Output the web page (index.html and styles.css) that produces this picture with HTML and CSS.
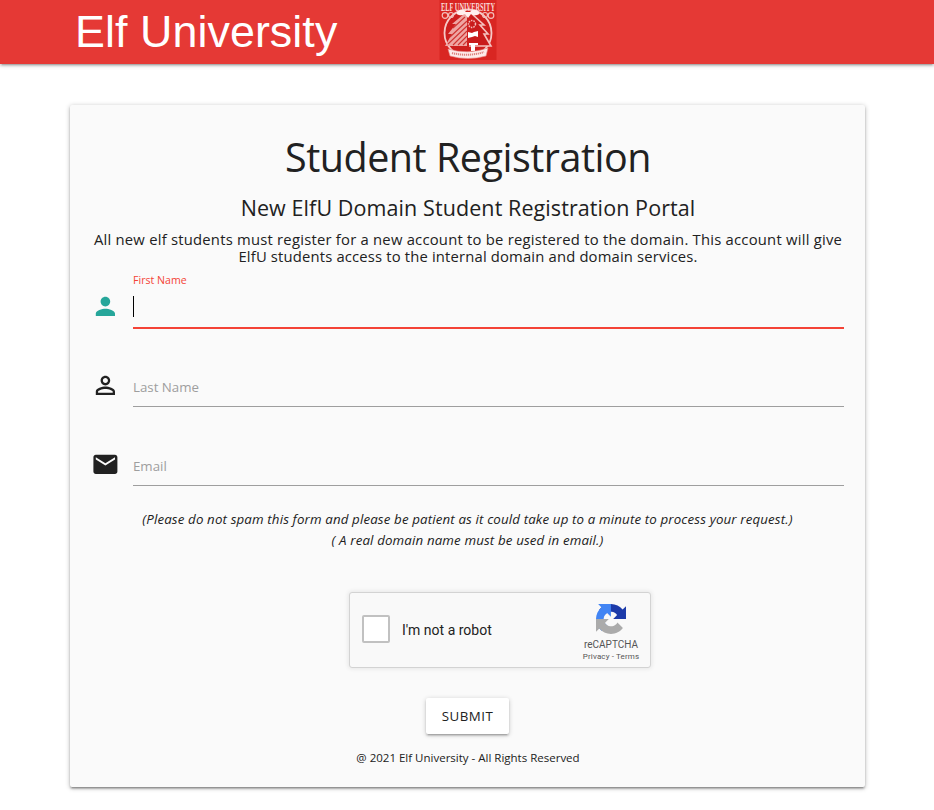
FILE: index.html
```html
<!DOCTYPE html>
<html lang="en">
<head>
<meta charset="utf-8">
<title>Elf University</title>
<link rel="stylesheet" href="styles.css">
</head>
<body>
<header class="nav">
  <div class="brand">Elf University</div>
  <svg class="crest" viewBox="0 0 58 60" aria-label="Elf University crest">
    <rect width="57" height="60" x=".5" fill="#d92622"/>
    <circle cx="29" cy="33" r="23.500" fill="#cd1f1e" stroke="#f6c9c6" stroke-width="1.800"/>
    <g fill="none" stroke="#f3bdba" stroke-width="1.200">
      <circle cx="6" cy="15.500" r="2.800"/><circle cx="12" cy="15" r="2.500"/><circle cx="52" cy="15.500" r="2.800"/><circle cx="46" cy="15" r="2.500"/>
    </g>
    <path d="M25 14L13 24h4l-8 10h4L6 46h22V14z" fill="#efa6a3"/>
    <path d="M26 17L14 28M28 21L11 37M28 26L9 44M28 31L14 45M28 36L19 45M28 41L24 45" stroke="#cf3532" stroke-width="1.100"/>
    <path d="M33 14l12 11h-4l8 9h-4l7 12H30" fill="#c91b1b" stroke="#f5c2bf" stroke-width="1.600"/>
    <text class="crest-name" x="29" y="11" textLength="54" lengthAdjust="spacingAndGlyphs" text-anchor="middle">ELF UNIVERSITY</text>
    <path d="M19 11q5-3 8 1h4q3-4 8-1 3 3-1 4-4 1-6-1l-3 4-3-4q-3 2-6 1-4-1-1-4z" fill="#fff0ef"/>
    <circle cx="33" cy="24" r="3.500" fill="none" stroke="#f4bcba" stroke-width="1.500" stroke-dasharray="1.500 1"/>
    <path d="M29 32l4 1 2-1 4-1v6l-3-1-3 1-4 1zM30 43h9v2h-3v6h-4v-6h-2z" fill="#fff"/>
    <path d="M9 49q20 6 40-1l-2 8q-18 5-36 0z" fill="#fdebea" stroke="#e88a87" stroke-width=".6"/>
    <path d="M13 53q16 4 32-1" fill="none" stroke="#dd817e" stroke-width="2" stroke-dasharray="1.200 .8"/>
  </svg>
</header>
<main class="card">
  <h1 class="title">Student Registration</h1>
  <h2 class="subtitle">New ElfU Domain Student Registration Portal</h2>
  <p class="intro">All new elf students must register for a new account to be registered to the domain. This account will give<br><span class="intro-end">ElfU students access to the internal domain and domain services.</span></p>
  <form class="form">
    <div class="field active">
      <svg class="icon" viewBox="0 0 24 24"><path d="M12 12c2.210 0 4-1.790 4-4s-1.790-4-4-4-4 1.790-4 4 1.790 4 4 4zm0 2c-2.670 0-8 1.340-8 4v2h16v-2c0-2.660-5.330-4-8-4z"/></svg>
      <div class="control"><label>First Name</label><i class="caret"></i></div>
    </div>
    <div class="field">
      <svg class="icon" viewBox="0 0 24 24"><path d="M12 5.900c1.160 0 2.100.94 2.100 2.100s-.94 2.100-2.100 2.100S9.900 9.160 9.900 8s.94-2.100 2.100-2.100m0 9c2.970 0 6.100 1.460 6.100 2.100v1.100H5.900V17c0-.64 3.130-2.100 6.100-2.100M12 4C9.790 4 8 5.790 8 8s1.790 4 4 4 4-1.790 4-4-1.790-4-4-4zm0 9c-2.670 0-8 1.340-8 4v3h16v-3c0-2.660-5.330-4-8-4z"/></svg>
      <div class="control"><label>Last Name</label></div>
    </div>
    <div class="field">
      <svg class="icon" viewBox="0 0 24 24"><path d="M20 4H4c-1.100 0-1.990.9-1.990 2L2 18c0 1.100.9 2 2 2h16c1.100 0 2-.9 2-2V6c0-1.100-.9-2-2-2zm0 4l-8 5-8-5V6l8 5 8-5v2z"/></svg>
      <div class="control"><label>Email</label></div>
    </div>
    <p class="note">(Please do not spam this form and please be patient as it could take up to a minute to process your request.)<br>( A real domain name must be used in email.)</p>
    <div class="captcha">
      <div class="check"></div>
      <div class="robot">I'm not a robot</div>
      <div class="rc">
        <svg class="rc-logo" viewBox="0 0 64 64">
          <path d="M64 31.955l-.033-1.370V4.687l-7.160 7.160C50.948 4.674 42.033.093 32.050.093c-10.400 0-19.622 4.960-25.458 12.640l11.736 11.860a15.550 15.550 0 0 1 4.754-5.334c2.050-1.600 4.952-2.906 8.968-2.906.485 0 .86.057 1.135.163 4.976.393 9.288 3.140 11.828 7.124l-8.307 8.307L64 31.953" fill="#1c3aa9"/>
          <path d="M31.862.094l-1.370.033H4.594l7.160 7.160C4.580 13.147 0 22.060 0 32.046c0 10.400 4.960 19.622 12.640 25.458L24.500 45.768a15.550 15.550 0 0 1-5.334-4.754c-1.600-2.050-2.906-4.952-2.906-8.968 0-.485.057-.86.163-1.135.393-4.976 3.140-9.288 7.124-11.828l8.307 8.307L31.860.095" fill="#4285f4"/>
          <path d="M.001 32.045l.033 1.370v25.898l7.160-7.160c5.860 7.173 14.774 11.754 24.760 11.754 10.400 0 19.622-4.960 25.458-12.640l-11.736-11.860a15.550 15.550 0 0 1-4.754 5.334c-2.050 1.600-4.952 2.906-8.968 2.906-.485 0-.86-.057-1.135-.163-4.976-.393-9.288-3.140-11.828-7.124l8.307-8.307-27.300.095" fill="#ababab"/>
        </svg>
        <div class="rc-name">reCAPTCHA</div>
        <div class="rc-links">Privacy - Terms</div>
      </div>
    </div>
    <button class="submit" type="button">SUBMIT</button>
  </form>
  <footer class="foot">@ 2021 Elf University - All Rights Reserved</footer>
</main>
</body>
</html>
```

FILE: styles.css
```css
* { box-sizing: border-box; }
body { margin: 0; min-height: 810px; background: #fff; color: #212121; font-family: "Open Sans", "Noto Sans", sans-serif; }
.nav { height: 64px; background: #e53935; display: flex; align-items: flex-start; padding-left: 75px; box-shadow: 0 2px 2px 0 rgba(0,0,0,.14), 0 3px 1px -2px rgba(0,0,0,.12), 0 1px 5px 0 rgba(0,0,0,.2); }
.brand { width: 364px; font: 44.8px/62px "Liberation Sans", sans-serif; letter-spacing: .07px; color: #fff; white-space: nowrap; }
.crest { width: 58px; height: 60px; display: block; }
.crest-name { font: bold 11.5px "Liberation Serif", serif; fill: #fbdad8; }
.card { width: 795px; height: 682px; margin: 41px 0 0 70px; padding: 24px 21px 0 23px; background: #fafafa; border-radius: 2px; box-shadow: 0 2px 2px 0 rgba(0,0,0,.2), 0 3px 1px -2px rgba(0,0,0,.14), 0 1px 5px 0 rgba(0,0,0,.28); text-align: center; }
.title, .subtitle, .intro, .note { margin: 0; font-weight: 400; white-space: nowrap; }
.title { font-size: 39.5px; line-height: 56px; letter-spacing: -.5px; margin-left: -1px; }
.subtitle { font-size: 21.5px; line-height: 30px; margin: 8px 0 0 -1px; letter-spacing: .09px; }
.intro { font-size: 14.8px; line-height: 17px; margin: 8px 0 0 -1px; letter-spacing: .23px; }
.intro-end { letter-spacing: .17px; }
.field { display: flex; height: 79px; }
.form { padding-top: 17px; }
.icon { width: 28.8px; height: 28.8px; margin: 9.5px 13.2px 0 -2px; fill: #212121; flex: none; }
.control { width: 711px; height: 46px; border-bottom: 1px solid #9e9e9e; text-align: left; }
.control label { display: block; margin-top: 14px; font-size: 13.3px; line-height: 24px; color: #9e9e9e; }
.active .icon { fill: #26a69a; }
.active .control { border-bottom: 2px solid #f44336; height: 47px; }
.active .control label { margin-top: -11px; font-size: 10.6px; line-height: 18px; color: #f44336; }
.caret { display: block; width: 1px; height: 21px; margin-top: 7px; background: #000; }
.note { font-size: 13.3px; line-height: 21px; font-style: italic; margin: -10px 0 0 -2px; letter-spacing: .14px; }
.captcha { width: 302px; height: 76px; margin: 41px 0 0 256px; border: 1px solid #d3d3d3; border-radius: 3px; background: #f9f9f9; box-shadow: 0 0 4px 1px rgba(0,0,0,.08); display: flex; align-items: center; font-family: Roboto, sans-serif; }
.check { width: 28px; height: 28px; margin-left: 12px; margin-top: -2px; border: 2px solid #c1c1c1; border-radius: 2px; background: #fff; }
.robot { width: 170px; margin-left: 12px; font-size: 14px; text-align: left; color: #222; }
.rc { width: 78px; height: 74px; padding-top: 11px; color: #555; }
.rc-logo { display: block; width: 30px; height: 30px; margin: 0 auto; }
.rc-name { font-size: 10px; line-height: 12px; margin-top: 5px; }
.rc-links { font-size: 8px; line-height: 12px; letter-spacing: .13px; }
.submit { display: block; width: 83px; height: 36px; margin: 30px 0 0 333px; padding: 0; border: 0; border-radius: 2px; background: #fff; color: #212121; font: 13.3px/36px "Open Sans", sans-serif; letter-spacing: .5px; box-shadow: 0 2px 2px 0 rgba(0,0,0,.14), 0 3px 1px -2px rgba(0,0,0,.12), 0 1px 5px 0 rgba(0,0,0,.2); }
.foot { font-size: 11.5px; line-height: 18px; margin: 15px 0 0 -1px; }
```
